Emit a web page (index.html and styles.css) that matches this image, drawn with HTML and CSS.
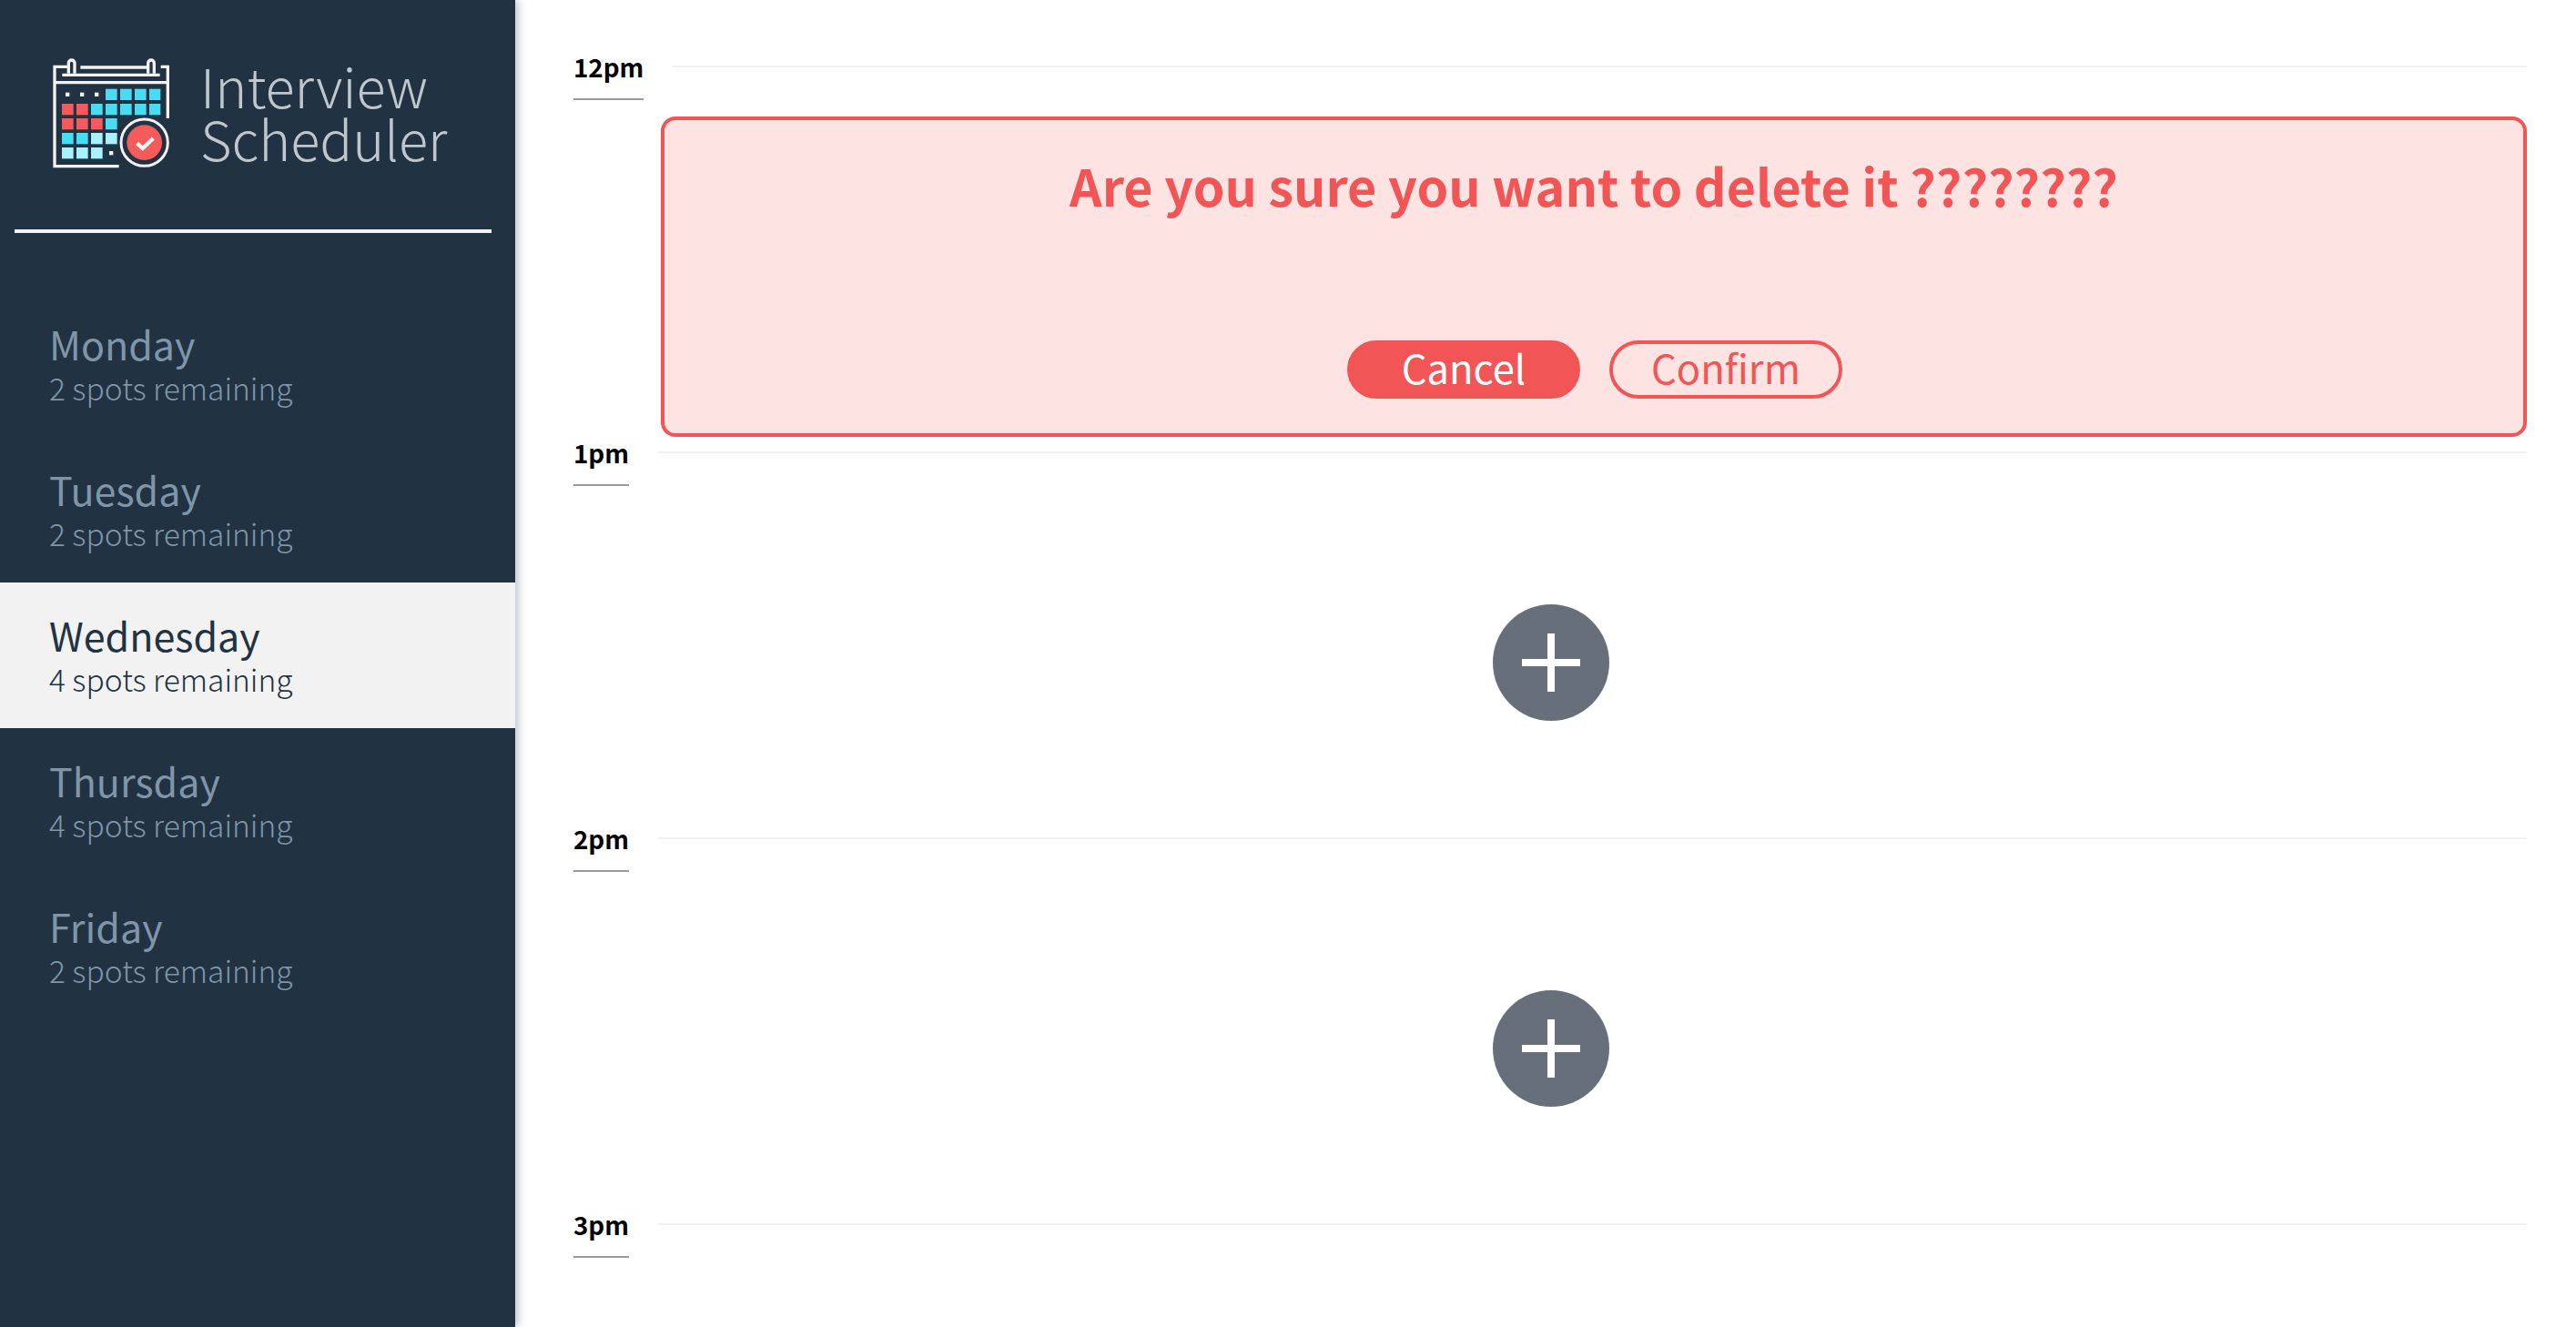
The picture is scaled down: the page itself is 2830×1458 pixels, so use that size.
FILE: index.html
```html
<!DOCTYPE html>
<html lang="en">
<head>
    <meta charset="UTF-8">
    <title>Interview Scheduler</title>
    <link rel="stylesheet" href="styles.css">
</head>
<body>
    <aside class="sidebar">
        <div class="brand">
            <svg class="brand-logo" viewBox="0 0 480 450" width="160" height="150">
                <g fill="none" stroke="#f2f2f2" stroke-width="10">
                    <path d="M272 398H60V70H105M145 72H365M410 70H433V240"/>
                    <path d="M85 97H407M60 122H433"/>
                    <path d="M106 92V58A10 10 0 0 1 126 58V92"/>
                    <path d="M368 92V58A10 10 0 0 1 388 58V92"/>
                </g>
                <g fill="#f2f2f2">
                    <rect x="96" y="155" width="13" height="13"/>
                    <rect x="144" y="155" width="13" height="13"/>
                    <rect x="192" y="155" width="13" height="13"/>
                    <rect x="240" y="348" width="13" height="13"/>
                </g>
                <g fill="#4bdcf5">
                    <rect x="228" y="143" width="38" height="37"/>
                    <rect x="276" y="143" width="38" height="37"/>
                    <rect x="324" y="143" width="38" height="37"/>
                    <rect x="372" y="143" width="37" height="37"/>
                    <rect x="180" y="192" width="38" height="37"/>
                    <rect x="228" y="192" width="38" height="37"/>
                    <rect x="276" y="192" width="38" height="37"/>
                    <rect x="324" y="192" width="38" height="37"/>
                    <rect x="372" y="192" width="37" height="37"/>
                    <rect x="228" y="240" width="38" height="37"/>
                    <rect x="84" y="288" width="38" height="37"/>
                    <rect x="132" y="288" width="38" height="37"/>
                </g>
                <g fill="#f45b5b">
                    <rect x="84" y="192" width="38" height="37"/>
                    <rect x="132" y="192" width="38" height="37"/>
                    <rect x="84" y="240" width="38" height="37"/>
                    <rect x="132" y="240" width="38" height="37"/>
                    <rect x="180" y="240" width="38" height="37"/>
                </g>
                <g fill="#a8f1ff">
                    <rect x="180" y="288" width="38" height="37"/>
                    <rect x="228" y="288" width="38" height="37"/>
                    <rect x="84" y="336" width="38" height="37"/>
                    <rect x="132" y="336" width="38" height="37"/>
                    <rect x="180" y="336" width="38" height="37"/>
                </g>
                <circle cx="356" cy="320" r="77" fill="#213243" stroke="#f2f2f2" stroke-width="9"/>
                <circle cx="356" cy="320" r="58" fill="#f45b5b"/>
                <path d="M332 322L350 339L385 306" fill="none" stroke="#f7f7f7" stroke-width="13"/>
            </svg>
            <div class="brand-name">Interview<br>Scheduler</div>
        </div>
        <hr class="sidebar-rule">
        <ul class="day-list">
            <li class="day">
                <h2 class="day-name">Monday</h2>
                <h3 class="day-spots">2 spots remaining</h3>
            </li>
            <li class="day">
                <h2 class="day-name">Tuesday</h2>
                <h3 class="day-spots">2 spots remaining</h3>
            </li>
            <li class="day day-selected">
                <h2 class="day-name">Wednesday</h2>
                <h3 class="day-spots">4 spots remaining</h3>
            </li>
            <li class="day">
                <h2 class="day-name">Thursday</h2>
                <h3 class="day-spots">4 spots remaining</h3>
            </li>
            <li class="day">
                <h2 class="day-name">Friday</h2>
                <h3 class="day-spots">2 spots remaining</h3>
            </li>
        </ul>
    </aside>

    <main class="schedule">
        <article class="slot">
            <header class="slot-head">
                <h4 class="slot-time">12pm</h4>
                <hr class="slot-rule">
            </header>
            <div class="slot-body">
                <form class="confirm-card">
                    <h1 class="confirm-text">Are you sure you want to delete it ????????</h1>
                    <div class="confirm-actions">
                        <button type="button" class="pill pill-solid">Cancel</button>
                        <button type="button" class="pill pill-outline">Confirm</button>
                    </div>
                </form>
            </div>
        </article>
        <article class="slot">
            <header class="slot-head">
                <h4 class="slot-time">1pm</h4>
                <hr class="slot-rule">
            </header>
            <div class="slot-body slot-empty">
                <button type="button" class="add-btn" aria-label="Add"></button>
            </div>
        </article>
        <article class="slot">
            <header class="slot-head">
                <h4 class="slot-time">2pm</h4>
                <hr class="slot-rule">
            </header>
            <div class="slot-body slot-empty">
                <button type="button" class="add-btn" aria-label="Add"></button>
            </div>
        </article>
        <article class="slot slot-last">
            <header class="slot-head">
                <h4 class="slot-time">3pm</h4>
                <hr class="slot-rule">
            </header>
        </article>
    </main>
</body>
</html>
```
FILE: styles.css
```css
html, body {
    height: 100%;
}

body {
    margin: 0;
    display: flex;
    overflow: hidden;
    background: #fff;
    font-family: "Noto Sans CJK SC", "Noto Sans", sans-serif;
}

/* sidebar */
.sidebar {
    width: 566px;
    flex-shrink: 0;
    background: #213243;
    box-shadow: 4px 0 8px rgba(33, 50, 67, 0.25);
    position: relative;
    z-index: 1;
}

.brand {
    display: flex;
    align-items: center;
    gap: 20px;
    height: 150px;
    padding: 50px 0 0 40px;
}

.brand-logo {
    flex-shrink: 0;
}

.brand-name {
    margin-top: -6px;
    font-size: 59.5px;
    font-weight: 300;
    line-height: 58px;
    color: #bfc6cc;
}

.sidebar-rule {
    height: 4px;
    margin: 52px 26px 0 16px;
    border: 0;
    background: #f2f2f2;
}

.day-list {
    list-style: none;
    margin: 64px 0 0;
    padding: 0;
}

.day {
    height: 160px;
    box-sizing: border-box;
    padding: 29px 54px 0;
    color: #7f95a8;
}

.day-selected {
    background: #f2f2f2;
    color: #213243;
}

.day-name {
    margin: 0;
    font-size: 43px;
    font-weight: 400;
    line-height: 57px;
}

.day-spots {
    margin: 0;
    font-size: 33.5px;
    font-weight: 300;
    line-height: 40px;
}

/* schedule */
.schedule {
    flex: 1;
    padding: 56px 54px 0 66px;
}

.slot {
    height: 424px;
}

.slot-last {
    height: auto;
}

.slot-head {
    display: flex;
    gap: 32px;
    height: 72px;
    margin-left: -2px;
}

.slot-time {
    align-self: flex-start;
    margin: 0;
    height: 52px;
    border-bottom: 2px solid #999;
    font-size: 27.75px;
    font-weight: 700;
    line-height: 34px;
    color: #000;
}

.slot-rule {
    flex: 1;
    height: 2px;
    margin: 16px 0 0;
    border: 0;
    background: #f2f2f2;
}

.slot-body {
    height: 352px;
}

.slot-empty {
    display: flex;
    align-items: center;
    justify-content: center;
}

.add-btn {
    position: relative;
    width: 128px;
    height: 128px;
    padding: 0;
    border: 0;
    border-radius: 50%;
    background: #676f7b;
}

.add-btn::before,
.add-btn::after {
    content: "";
    position: absolute;
    background: #fff;
}

.add-btn::before {
    left: 32px;
    top: 60px;
    width: 64px;
    height: 8px;
}

.add-btn::after {
    left: 60px;
    top: 32px;
    width: 8px;
    height: 64px;
}

/* delete confirmation */
.confirm-card {
    height: 352px;
    box-sizing: border-box;
    margin-left: 94px;
    padding: 31px 0 38px;
    display: flex;
    flex-direction: column;
    justify-content: space-between;
    align-items: center;
    border: 4px solid #f25555;
    border-radius: 16px;
    background: #fee3e3;
    color: #f25555;
}

.confirm-text {
    margin: 0;
    font-size: 55.6px;
    font-weight: 700;
    line-height: 80px;
}

.confirm-actions {
    display: flex;
    gap: 32px;
    margin-left: 2px;
}

.pill {
    width: 256px;
    height: 64px;
    padding: 0 0 5px;
    box-sizing: border-box;
    border: 4px solid #f25555;
    border-radius: 32px;
    font-family: inherit;
    font-size: 43.5px;
    line-height: 48px;
}

.pill-solid {
    background: #f25555;
    color: #fff;
}

.pill-outline {
    background: transparent;
    color: #f25555;
}
```
